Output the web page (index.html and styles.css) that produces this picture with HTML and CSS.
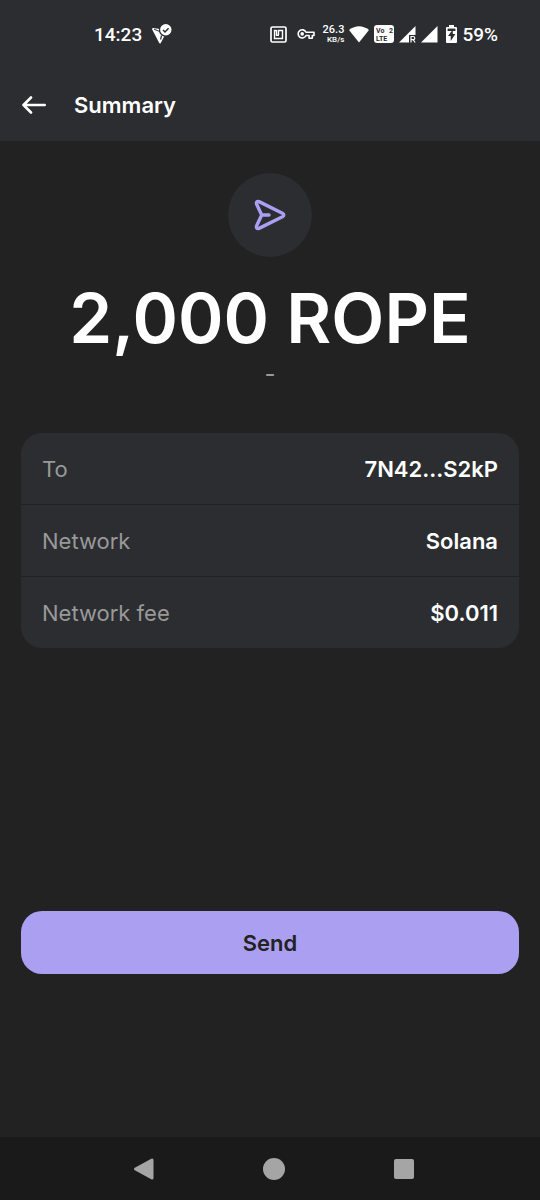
FILE: index.html
```html
<!DOCTYPE html>
<html lang="en">
<head>
<meta charset="utf-8">
<meta name="viewport" content="width=device-width, initial-scale=1">
<title>Summary</title>
<link rel="stylesheet" href="styles.css">
</head>
<body>
<div class="screen">
  <div class="status">
    <div class="status-left">
      <time class="clock">14:23</time>
      <svg width="20" height="20" viewBox="0 0 20 20" aria-hidden="true">
        <path d="M1 5 14 7 8 18.500Z" fill="#fff" stroke="#fff" stroke-width="1.800" stroke-linejoin="round"/>
        <path d="M2 5.200 9 8" fill="none" stroke="#2c2d31" stroke-width="1"/>
        <path d="M9.500 11.500 8.600 15.500" fill="none" stroke="#2c2d31" stroke-width="1.200"/>
        <circle cx="13.500" cy="6.200" r="6.500" fill="#2c2d31"/>
        <circle cx="13.800" cy="5.800" r="5.700" fill="#fff"/>
        <path d="m11 6 2 2 3.600-3.800" fill="none" stroke="#2c2d31" stroke-width="1.500"/>
      </svg>
    </div>
    <div class="status-right">
      <svg class="nfc" width="17" height="17" viewBox="0 0 17 17" fill="none" stroke="#fff" aria-hidden="true">
        <rect x="1" y="1" width="15" height="15" rx="1.500" stroke-width="1.700"/>
        <path d="M6.500 4.500h-2v8h8v-8h-4V9M6.500 4v5.200h2.500" stroke-width="1.400"/>
      </svg>
      <svg class="key" width="18" height="12" viewBox="0 0 18 12" fill="none" stroke="#fff" stroke-width="1.600" stroke-linejoin="round" aria-hidden="true">
        <path d="M9 4.200h8v3.300h-1.700v2.700h-3.200V7.500H9A4.100 4.100 0 1 1 9 4.200Z"/>
        <circle cx="5.200" cy="5.900" r="1" fill="#fff"/>
      </svg>
      <div class="speed"><span class="rate">26.3</span><span class="unit">KB/s</span></div>
      <svg class="wifi" width="20" height="17" viewBox="0 0 20 17" aria-hidden="true"><path d="M0 4Q10-3.500 20 4L10 16.500Z" fill="#fff"/></svg>
      <svg class="volte" width="20" height="18" viewBox="0 0 20 18" aria-hidden="true">
        <rect width="20" height="18" rx="3" fill="#fff"/>
        <g class="volte-text"><text x="2" y="8">Vo</text><text x="15" y="8">2</text><text x="2" y="16">LTE</text></g>
      </svg>
      <svg class="signal" width="17" height="17" viewBox="0 0 17 17" aria-hidden="true">
        <path d="M16.500 0v9H10v7.500H0Z" fill="#fff"/>
        <path d="M12 16.500v-6h2.200a1.500 1.500 0 0 1 0 3.200H12m2 0 2.200 2.800" fill="none" stroke="#fff" stroke-width="1.200"/>
      </svg>
      <svg class="signal2" width="17" height="17" viewBox="0 0 17 17" aria-hidden="true"><path d="M16.500 0v16.500H0Z" fill="#fff"/></svg>
      <svg class="battery" width="11" height="18" viewBox="0 0 11 18" aria-hidden="true">
        <path d="M3 0h5v2h2q1 0 1 1v14q0 1-1 1H1q-1 0-1-1V3q0-1 1-1h2Z" fill="#fff"/>
        <path d="M1.600 3.600h7.800V6H1.600Z" fill="#2c2d31"/>
        <path d="M6.800 4.500 2 11h2.700v5L9.400 9H6.800Z" fill="#2c2d31"/>
      </svg>
      <span class="percent">59%</span>
    </div>
  </div>
  <header class="header">
    <button class="back" type="button" aria-label="Back">
      <svg width="24" height="18" viewBox="0 0 24 18" fill="none" stroke="#fff" stroke-width="2.600" stroke-linecap="round" stroke-linejoin="round" aria-hidden="true"><path d="M22.700 9H1.500M9 1.500 1.500 9 9 16.500"/></svg>
    </button>
    <h1 class="title">Summary</h1>
  </header>
  <main class="main">
    <div class="badge">
      <svg width="32" height="32" viewBox="0 0 34 34" fill="none" stroke="#ab9ff2" stroke-width="3.600" stroke-linecap="round" stroke-linejoin="round" aria-hidden="true">
        <path d="M5.400 2.800 30.200 15.200Q33.200 17 30.200 18.800L5.400 31.200Q1.800 32 2.800 28.400L8.200 17 2.800 5.600Q1.800 2 5.400 2.800ZM8.200 17H16"/>
      </svg>
    </div>
    <p class="amount">2,000 ROPE</p>
    <p class="fiat">-</p>
    <dl class="details">
      <div class="row"><dt>To</dt><dd>7N42...S2kP</dd></div>
      <div class="row"><dt>Network</dt><dd>Solana</dd></div>
      <div class="row"><dt>Network fee</dt><dd>$0.011</dd></div>
    </dl>
    <button class="send" type="button">Send</button>
  </main>
  <nav class="navbar" aria-label="System navigation">
    <button type="button" aria-label="Back"><svg width="24" height="24" viewBox="0 0 24 24" aria-hidden="true"><path d="M3.500 12 20 3v18Z" fill="#a5a5a5" stroke="#a5a5a5" stroke-width="3" stroke-linejoin="round"/></svg></button>
    <button type="button" aria-label="Home"><svg width="24" height="24" viewBox="0 0 24 24" aria-hidden="true"><circle cx="12" cy="12" r="11" fill="#a5a5a5"/></svg></button>
    <button type="button" aria-label="Recent apps"><svg width="24" height="24" viewBox="0 0 24 24" aria-hidden="true"><rect x="2" y="2" width="20" height="20" rx="2" fill="#a5a5a5"/></svg></button>
  </nav>
</div>
</body>
</html>
```
FILE: styles.css
```css
* { box-sizing: border-box; }
body { margin: 0; background: #222222; color: #fff; font-family: Inter, "Liberation Sans", sans-serif; }
button { border: 0; padding: 0; background: none; color: inherit; font: inherit; cursor: pointer; }
svg { display: block; flex: none; }
p, h1, dl, dd { margin: 0; }

.screen { display: flex; flex-direction: column; min-height: 100vh; }

.status {
  display: flex; align-items: center; justify-content: space-between;
  height: 68px; padding: 0 42px 0 94px;
  background: #2c2d31; font-family: Roboto, sans-serif; font-size: 19px; font-weight: 500;
}
.status-left, .status-right { display: flex; align-items: center; }
.status-left { gap: 10px; }
.key { margin-left: 10px; }
.speed { display: flex; flex-direction: column; align-items: flex-end; margin-left: 8px; }
.rate { font-size: 11px; line-height: 12px; }
.unit { font-size: 8px; line-height: 8px; }
.wifi, .volte, .signal, .signal2 { margin-left: 5px; }
.volte-text { font: 700 7px Roboto, sans-serif; fill: #2c2d31; }
.battery { margin-left: 8px; }
.percent { margin-left: 5px; }

.header { display: flex; align-items: center; gap: 28px; height: 73px; padding: 0 22px; background: #2c2d31; }
.title { font-size: 22px; line-height: 28px; font-weight: 600; }

.main { flex: 1; display: flex; flex-direction: column; align-items: center; padding: 32px 21px; }
.badge { display: grid; place-items: center; width: 84px; height: 84px; border-radius: 50%; background: #2c2d31; }
.amount { margin-top: 19px; font-size: 69px; line-height: 84px; font-weight: 600; white-space: nowrap; }
.fiat { font-size: 24px; line-height: 28px; color: #999999; }
.details { display: grid; gap: 1px; width: 100%; margin-top: 45px; border-radius: 21px; overflow: hidden; }
.row { display: flex; align-items: center; justify-content: space-between; height: 71px; padding: 0 21px; background: #2c2d31; font-size: 22px; line-height: 28px; }
.row dt { color: #999999; }
.row dd { font-weight: 600; }
.send { width: 100%; height: 63px; margin-top: 263px; border-radius: 21px; background: #ab9ff2; color: #222222; font-size: 22px; font-weight: 600; }

.navbar { display: flex; align-items: center; justify-content: center; gap: 106px; height: 63px; padding-left: 7px; background: #1a1a1a; }
```
